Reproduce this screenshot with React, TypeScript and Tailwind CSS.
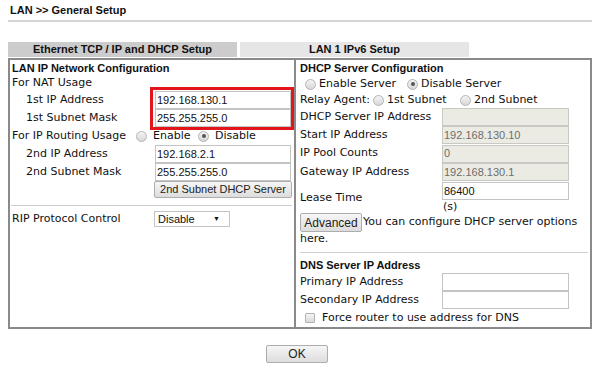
const sans = "font-['Verdana','DejaVu_Sans',sans-serif]";
const arial = "font-['Arial','Liberation_Sans',sans-serif]";

function Radio({ on }: { on?: boolean }) {
  return (
    <span className="inline-flex items-center justify-center w-[11px] h-[11px] rounded-full border border-[#b4b4b4] bg-gradient-to-b from-[#f4f4f4] to-[#d8d8d8] shrink-0">
      {on && <span className="w-[4px] h-[4px] rounded-full bg-[#555]" />}
    </span>
  );
}

function Field({ value = '', disabled, w = 'w-[136px]' }: { value?: string; disabled?: boolean; w?: string }) {
  return (
    <div
      className={`${w} h-[18px] border pl-[1px] flex items-center text-[11px] ${arial} ${
        disabled ? 'bg-[#ebebe4] border-[#c9c9c3] text-[#6d6d6d]' : 'bg-white border-[#c4c4c4] text-[#111]'
      }`}
    >
      {value}
    </div>
  );
}

function Btn({ children, className = '' }: { children: React.ReactNode; className?: string }) {
  return (
    <div
      className={`border border-[#adadad] rounded-[2px] bg-gradient-to-b from-[#f6f6f6] to-[#dddddd] flex items-center justify-center whitespace-nowrap ${arial} text-[11px] text-[#222] shrink-0 ${className}`}
    >
      {children}
    </div>
  );
}

function Row({ label, children, indent, w = 'w-[145px]' }: { label: string; children: React.ReactNode; indent?: boolean; w?: string }) {
  return (
    <div className="flex items-center h-[18px]">
      <div className={`${w} ${indent ? 'pl-[14px]' : ''}`}>{label}</div>
      {children}
    </div>
  );
}

export default function App() {
  return (
    <div className={`w-[600px] h-[368px] bg-white text-[#111] ${sans} text-[11px] px-2`}>
      <div className={`${arial} font-bold text-[11px] pt-[2px] pl-[2px] h-[20px]`}>LAN &gt;&gt; General Setup</div>
      <div className="h-[2px] bg-[#d4d4d4] w-[584px]" />

      <div className={`flex mt-[20px] h-[15px] ${arial} font-bold text-[11px]`}>
        <div className="w-[229px] bg-[#cccccc] flex items-center justify-center">Ethernet TCP / IP and DHCP Setup</div>
        <div className="w-[3px]" />
        <div className="w-[229px] bg-[#e6e6e6] flex items-center justify-center">LAN 1 IPv6 Setup</div>
      </div>

      <div className="flex w-[584px] h-[271px] border-2 border-[#8a8a8a] mt-[1px]">
        {/* left */}
        <div className="relative w-[286px] border-r-2 border-[#8a8a8a] pl-[2px] pr-[2px] pt-[1px]">
          <div className={`${arial} font-bold text-[11px] h-[15px] flex items-center`}>LAN IP Network Configuration</div>
          <div className="h-[15px] flex items-center">For NAT Usage</div>
          <Row label="1st IP Address" indent w="w-[143px]">
            <Field value="192.168.130.1" />
          </Row>
          <Row label="1st Subnet Mask" indent w="w-[143px]">
            <Field value="255.255.255.0" />
          </Row>
          <div className="flex items-center h-[18px]">
            <div className="w-[124px]">For IP Routing Usage</div>
            <Radio />
            <span className="ml-[6px] w-[45px]">Enable</span>
            <Radio on />
            <span className="ml-[6px]">Disable</span>
          </div>
          <Row label="2nd IP Address" indent w="w-[143px]">
            <Field value="192.168.2.1" />
          </Row>
          <Row label="2nd Subnet Mask" indent w="w-[143px]">
            <Field value="255.255.255.0" />
          </Row>
          <div className="flex h-[17px]">
            <div className="w-[143px]" />
            <Btn className="w-[138px] h-[17px] text-[11.5px]">2nd Subnet DHCP Server</Btn>
          </div>
          <div className="h-[1px] bg-[#cfcfcf] mt-[7px] -ml-[1px]" />
          <div className="flex items-center h-[16px] mt-[5px]">
            <div className="w-[142px]">RIP Protocol Control</div>
            <div className={`w-[76px] h-[16px] border border-[#c4c4c4] bg-white flex items-center justify-between pl-[3px] pr-[3px] ${arial} text-[11px]`}>
              <span>Disable</span>
              <span className="text-[7px] mr-[6px]">▼</span>
            </div>
          </div>
          <div className="absolute left-[140px] top-[27px] w-[144px] h-[43px] border-[3px] border-[#e4141b]" />
        </div>

        {/* right */}
        <div className="flex-1 pl-[4px] pr-[2px] pt-[1px]">
          <div className={`${arial} font-bold text-[11px] h-[15px] flex items-center`}>DHCP Server Configuration</div>
          <div className="h-[16px] flex items-center pl-[5px]">
            <Radio />
            <span className="ml-[3px] w-[88px]">Enable Server</span>
            <Radio on />
            <span className="ml-[3px]">Disable Server</span>
          </div>
          <div className="h-[16px] flex items-center">
            <span className="mr-[3px]">Relay Agent:</span>
            <Radio />
            <span className="ml-[3px] w-[73px]">1st Subnet</span>
            <Radio />
            <span className="ml-[3px]">2nd Subnet</span>
          </div>
          <Row label="DHCP Server IP Address" w="w-[142px]">
            <Field disabled w="w-[127px]" />
          </Row>
          <Row label="Start IP Address" w="w-[142px]">
            <Field disabled value="192.168.130.10" w="w-[127px]" />
          </Row>
          <div className="flex items-center h-[19px]">
            <div className="w-[142px]">IP Pool Counts</div>
            <Field disabled value="0" w="w-[127px]" />
          </div>
          <Row label="Gateway IP Address" w="w-[142px]">
            <Field disabled value="192.168.130.1" w="w-[127px]" />
          </Row>
          <div className="flex items-center mt-[1px] h-[33px]">
            <div className="w-[142px]">Lease Time</div>
            <div className="flex flex-col">
              <Field value="86400" w="w-[127px]" />
              <span className="h-[15px] flex items-center pl-[1px]">(s)</span>
            </div>
          </div>
          <div className="flex items-center h-[19px] -mt-[2px]">
            <Btn className="w-[62px] h-[19px] text-[12px]">Advanced</Btn>
            <span className="ml-[1px] whitespace-nowrap">You can configure DHCP server options</span>
          </div>
          <div className="h-[14px] flex items-center">here.</div>
          <div className="h-[1px] bg-[#cfcfcf] mt-[6px]" />
          <div className={`${arial} font-bold text-[11px] h-[15px] flex items-center mt-[5px]`}>DNS Server IP Address</div>
          <Row label="Primary IP Address" w="w-[142px]">
            <Field w="w-[127px]" />
          </Row>
          <Row label="Secondary IP Address" w="w-[142px]">
            <Field w="w-[127px]" />
          </Row>
          <div className="flex items-center h-[18px] pl-[5px]">
            <span className="w-[10px] h-[10px] border border-[#b4b4b4] rounded-[1px] bg-gradient-to-b from-[#f4f4f4] to-[#dadada]" />
            <span className="ml-[7px]">Force router to use address for DNS</span>
          </div>
        </div>
      </div>

      <div className="flex w-[584px] mt-[16px] pl-[258px]">
        <Btn className="w-[62px] h-[18px] text-[12px]">OK</Btn>
      </div>
    </div>
  );
}
